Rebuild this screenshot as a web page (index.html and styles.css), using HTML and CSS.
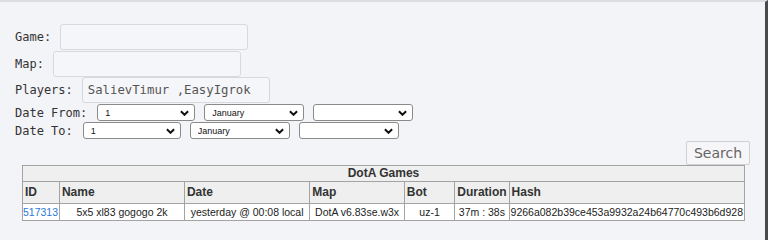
FILE: index.html
```html
<!DOCTYPE html>
<html lang="en">
<head>
  <meta charset="UTF-8">
  <meta name="viewport" content="width=device-width, initial-scale=1.0">
  <title>DotA Games</title>
  <link rel="stylesheet" href="styles.css">
</head>
<body>
  <div class="page">
    <!-- Search form -->
    <form class="search-form">
      <div class="field">
        <label for="game">Game:</label>
        <input type="text" id="game">
      </div>
      <div class="field">
        <label for="map">Map:</label>
        <input type="text" id="map">
      </div>
      <div class="field">
        <label for="players">Players:</label>
        <input type="text" id="players" value="SalievTimur ,EasyIgrok">
      </div>
      <div class="date-row">
        <label>Date From:</label>
        <span class="sel sel-day"><select><option>1</option></select><svg viewBox="0 0 10 6"><path d="M1 1l4 4 4-4"/></svg></span>
        <span class="sel sel-month"><select><option>January</option></select><svg viewBox="0 0 10 6"><path d="M1 1l4 4 4-4"/></svg></span>
        <span class="sel sel-year"><select><option></option></select><svg viewBox="0 0 10 6"><path d="M1 1l4 4 4-4"/></svg></span>
      </div>
      <div class="date-row">
        <label>Date To:</label>
        <span class="sel sel-day"><select><option>1</option></select><svg viewBox="0 0 10 6"><path d="M1 1l4 4 4-4"/></svg></span>
        <span class="sel sel-month"><select><option>January</option></select><svg viewBox="0 0 10 6"><path d="M1 1l4 4 4-4"/></svg></span>
        <span class="sel sel-year"><select><option></option></select><svg viewBox="0 0 10 6"><path d="M1 1l4 4 4-4"/></svg></span>
      </div>
      <div class="actions">
        <button type="button" class="search-btn">Search</button>
      </div>
    </form>

    <!-- Results -->
    <table class="games">
      <tr>
        <th colspan="7" class="title">DotA Games</th>
      </tr>
      <tr>
        <th class="c-id">ID</th>
        <th class="c-name">Name</th>
        <th class="c-date">Date</th>
        <th class="c-map">Map</th>
        <th class="c-bot">Bot</th>
        <th class="c-dur">Duration</th>
        <th class="c-hash">Hash</th>
      </tr>
      <tr>
        <td class="id"><a href="#">517313</a></td>
        <td>5x5 xl83 gogogo 2k</td>
        <td>yesterday @ 00:08 local</td>
        <td>DotA v6.83se.w3x</td>
        <td>uz-1</td>
        <td>37m : 38s</td>
        <td>9266a082b39ce453a9932a24b64770c493b6d928</td>
      </tr>
    </table>
  </div>
</body>
</html>
```

FILE: styles.css
```css
:root {
  --page-bg: #f3f4f8;
  --border: #a3a3a3;
  --head-bg: #efefef;
  --link: #2a78d8;
}

body {
  margin: 0;
  padding: 0;
  background-color: #ffffff;
}

.page {
  height: 238px;
  background-color: var(--page-bg);
  border-top: 2px solid #dcdde0;
  border-right: 3px solid #4a4a4a;
  box-sizing: content-box;
}

.search-form {
  padding: 22px 15px 0 15px;
  font-family: "DejaVu Sans Mono", monospace;
  font-size: 12px;
  color: #333;
}

.field {
  display: flex;
  align-items: center;
  gap: 9px;
  height: 26.5px;
}

.field input {
  width: 188px;
  height: 26px;
  box-sizing: border-box;
  border: 1px solid #d8d9dc;
  border-radius: 3px;
  background-color: #f5f6f9;
  padding: 0 5px;
  font-family: "DejaVu Sans Mono", monospace;
  font-size: 12.3px;
  color: #555;
  outline: none;
}

.date-row {
  display: flex;
  align-items: center;
  height: 18px;
}

.date-row label {
  margin-right: 10px;
}

.sel {
  position: relative;
  display: inline-flex;
  margin-right: 9px;
}

.sel select {
  appearance: none;
  -webkit-appearance: none;
  width: 100%;
  height: 17px;
  box-sizing: border-box;
  border: 1px solid #8a8a8a;
  border-radius: 3px;
  background-color: #fff;
  font-family: "Liberation Sans", Arial, sans-serif;
  font-size: 9px;
  color: #111;
  padding: 0 14px 0 7px;
}

.sel svg {
  position: absolute;
  right: 6px;
  top: 6px;
  width: 9px;
  height: 6px;
  fill: none;
  stroke: #111;
  stroke-width: 2.2;
  pointer-events: none;
}

.sel-day { width: 98px; }
.sel-month { width: 100px; }
.sel-year { width: 100px; }

.actions {
  display: flex;
  justify-content: flex-end;
  margin-top: 1px;
}

.search-btn {
  height: 24px;
  width: 64px;
  border: 1px solid #d0d0d4;
  border-radius: 2px;
  background-color: #f6f6f8;
  font-family: "DejaVu Sans", sans-serif;
  font-size: 14px;
  color: #666;
  padding: 0;
}

.games {
  border-collapse: collapse;
  margin: 0 0 0 22px;
  width: 723px;
  font-family: "Liberation Sans", Arial, sans-serif;
  color: #222;
  border: 1px solid #999;
}

.games th {
  background-color: var(--head-bg);
  border: 1px solid var(--border);
  font-size: 12px;
  text-align: left;
  padding: 0 2px;
  height: 21px;
  color: #333;
}

.games th.title {
  text-align: center;
  height: 15px;
  padding: 0;
}

.games td {
  background-color: #fff;
  border: 1px solid var(--border);
  font-size: 10.5px;
  text-align: center;
  padding: 0 1px;
  height: 16px;
  white-space: nowrap;
}

.games td.id {
  text-align: left;
  padding: 0;
}

.games a {
  color: var(--link);
  text-decoration: none;
}

.c-id { width: 32px; }
.c-name { width: 122px; }
.c-date { width: 121px; }
.c-map { width: 90px; }
.c-bot { width: 47px; }
.c-dur { width: 47px; }
.c-hash { width: 229px; }
```
